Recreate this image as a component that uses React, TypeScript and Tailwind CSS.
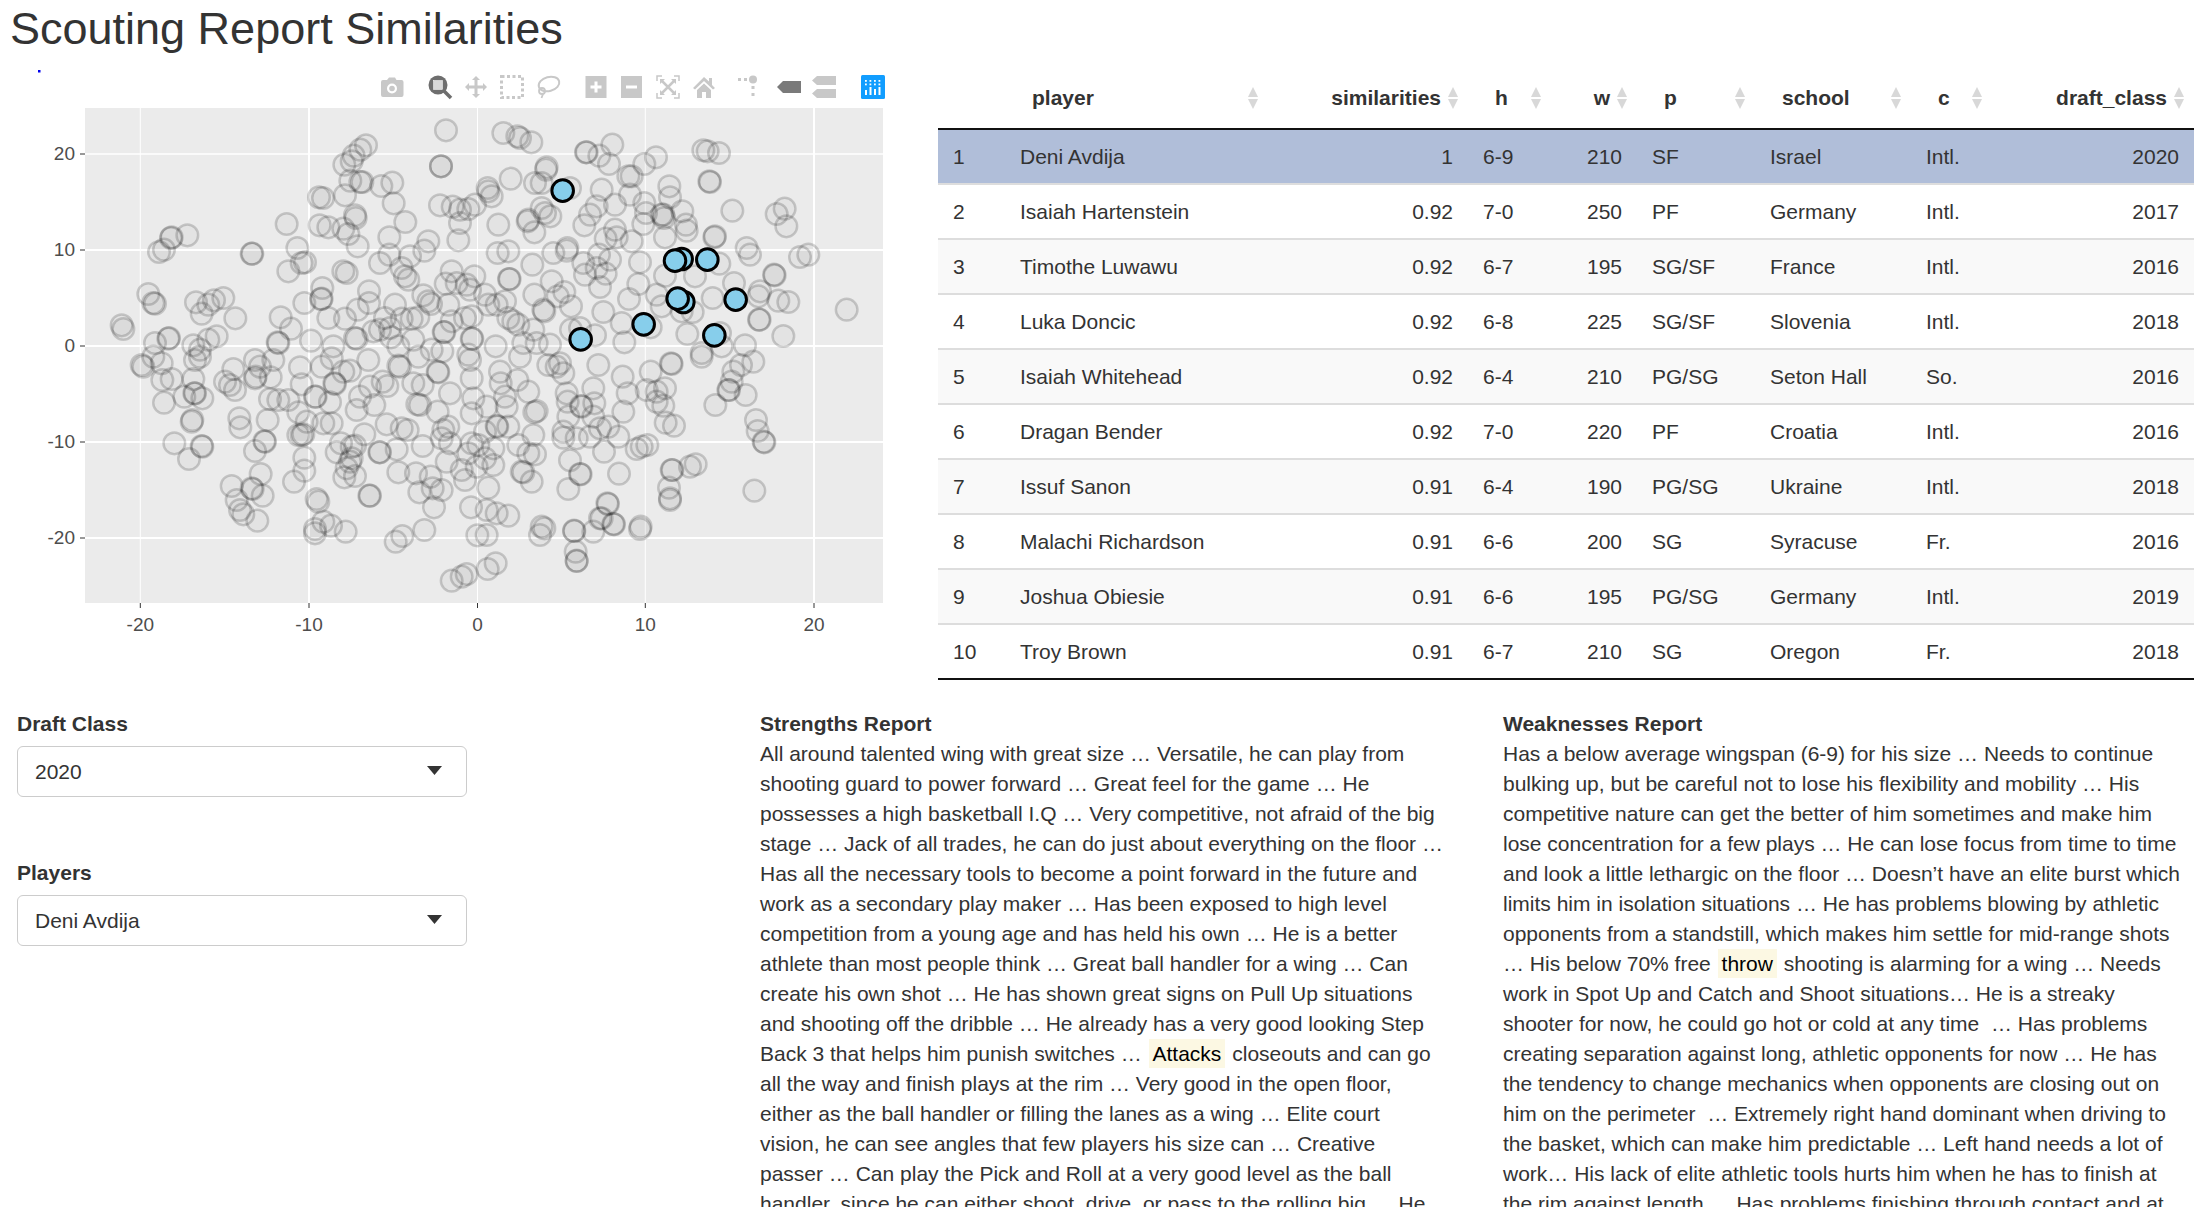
const tileA = [1083,67,1068,175,1068,175,843,112,826,125,806,143,800,160,778,170,796,218,826,222,832,222,889,234,922,224,926,286,780,262,702,268,714,270,1065,292,1103,296,1125,305,1150,303,1170,290,1125,345,1120,397,961,342,810,322,812,330,704,352,730,358,775,362,790,378,818,415,605,348,913,388,1030,400,1018,428,975,445,913,440,885,465,637,420,660,463,650,465,610,490,500,437,502,437,307,382,260,388,258,390,237,425,222,432,190,558,205,585,210,587,333,583,370,590,387,577,415,570,350,617,451,631,110,652,115,663,712,540,708,573,710,572,658,585,852,550,852,585,818,605,785,495,775,490,950,480,960,505,970,515,1100,490,1082,527,1115,525,1145,530,1168,505,1155,545,1015,562,1030,580,1038,588,930,590,1090,590,1200,560,1000,628,980,632,950,632,900,630,1100,640,1140,630,1160,625,1076,672,1078,672,1160,692,1162,692,730,630,780,632,587,628,618,662,578,703,580,705,678,698,745,715,810,690,815,692,865,670,885,665,918,688,985,695,940,715,915,660,1040,725,1072,730,1150,740,250,692,252,690,210,705,325,712,370,695,395,685,345,725];
const tileB = [55,75,97,85,105,90,139,103,305,133,303,133,343,143,382,110,372,168,478,168,513,148,655,127,668,130,702,135,673,220,675,222,185,178,183,185,77,212,150,225,170,225,255,240,8,240,10,250,20,265,430,205,440,205,350,245,553,235,555,268,592,310,742,308,875,318,899,302,904,355,435,260,478,285,390,290,335,295,315,320,298,352,170,300,180,315,196,325,130,335,128,340,148,373,40,350,483,315,530,320,535,320,537,330,603,350,605,368,540,388,390,365,362,392,395,388,440,400,475,348,690,385,688,388,785,420,795,440,945,447,970,440,247,420,245,428,205,435,38,435,70,430,142,470,465,463,375,455,342,440,295,465,300,500,335,480,362,497,345,537,72,513,74,513,200,520,460,528,540,503,630,505,703,467,867,500,869,502,747,525,825,550,820,565,880,578,910,582,683,570,238,552,218,565,148,560,432,573,515,560,530,595,590,610,623,612,258,595,175,605,178,610,355,612,60,580,35,590,10,590,70,630,85,640,100,650,822,635,824,635,410,645,497,658,330,682,258,665,285,660,145,665,418,703,607,678,705,675,650,735,710,715,780,712,895,684,1085,605,32,715,115,705,155,705,195,710];
const tileC = [205,5,170,30,175,35,230,25,260,72,232,75,325,72,345,5,330,15,237,143,298,125,328,115,330,115,352,130,322,195,320,200,463,190,466,217,420,80,445,42,450,105,435,90,510,70,512,65,525,35,557,67,510,15,565,15,645,37,650,88,690,125,692,125,735,142,748,85,750,87,775,50,795,47,710,35,740,10,850,15,855,95,825,125,815,165,868,150,893,80,907,93,940,32,945,35,985,85,1013,90,997,148,1005,150,1058,50,1060,52,1095,115,1058,170,1000,5,1155,15,1160,70,1165,130,1160,175,1200,230,548,195,555,132,580,135,610,135,640,172,665,200,715,205,740,205,905,208,950,220,968,225,838,238,1090,215,1075,225,1070,250,1095,265,1160,265,1180,270,1150,295,1130,345,1085,320,1140,375,1175,335,1200,310,1013,273,935,283,885,292,883,292,810,272,800,275,768,265,755,292,800,310,795,320,785,340,778,367,810,363,640,240,655,238,650,240,658,308,658,347,627,380,510,288,538,259,540,260,268,265,350,273,352,275,312,312,527,357,440,393,500,400,503,402,533,422,455,435,465,465,475,478,517,497,695,432,700,440,855,422,853,422,715,500,738,512,690,522,690,535,782,530,940,352,993,355,1037,365,1003,412,1043,400,1070,405,1047,457,1158,457,1177,541,1018,525,952,543,932,560,1100,677,1130,665,1145,657];
const tileD = [105,5,45,50,47,85,97,75,130,110,60,125,65,155,5,155,35,213,37,215,70,215,148,172,155,168,145,240,245,115,248,140,250,185,288,153,290,155,325,100,328,145,325,185,340,30,413,65,428,115,415,170,370,215,345,220,235,230,235,248,275,250,315,245,400,245,190,30,215,35,235,55,225,25,497,50,485,105,515,110,540,100,515,140,535,152,558,25,560,27,650,5,745,50,768,30,805,20,740,80,730,105,732,105,782,120,691,150,813,195,818,228,836,260,838,262,542,203,567,212,455,282,470,275,487,270,357,290,255,316,285,357,287,358,402,356,250,402,100,270,130,295,150,298,25,280,25,330,115,352,110,350,140,380,10,398,35,475,70,482,5,465,5,540,170,515,178,520,165,540,267,527,268,528,272,590,275,617,275,618,325,530,345,490,350,490,367,445,369,447,385,507,387,508,467,515,465,522,562,345,560,345,615,335,632,328,552,398,555,430,555,435,808,407,32,625,8,642];
const blue = [233,248,590,453,570,458,667,455,595,582,578,572,752,575,476,649,287,694,688,682];

function toPoints(flat: number[], ox: number, oy: number) {
  const out: [number, number][] = [];
  for (let i = 0; i < flat.length; i += 2) out.push([ox + flat[i] / 3, oy + flat[i + 1] / 3]);
  return out;
}

const greyDots = [
  ...toPoints(tileA, 85, 108),
  ...toPoints(tileB, 485, 108),
  ...toPoints(tileC, 85, 355),
  ...toPoints(tileD, 485, 355),
];
const blueDots = toPoints(blue, 485, 108);

const xTicks = [
  { label: "-20", x: 140.3, w: 1 },
  { label: "-10", x: 309, w: 2 },
  { label: "0", x: 477.5, w: 1 },
  { label: "10", x: 645.3, w: 1 },
  { label: "20", x: 814, w: 2 },
];
const yTicks = [
  { label: "20", y: 154, w: 1.5 },
  { label: "10", y: 250, w: 2 },
  { label: "0", y: 346, w: 2 },
  { label: "-10", y: 442, w: 2 },
  { label: "-20", y: 538, w: 2 },
];

function ModeIcon({ x, children }: { x: number; children: React.ReactNode }) {
  return <g transform={`translate(${x - 12} 75)`}>{children}</g>;
}

function ModeBar() {
  const idle = "#c8c8c8";
  const dark = "#6e6e6e";
  return (
    <g>
      {/* camera */}
      <ModeIcon x={392}>
        <path d="M1 7q0-2 2-2h4l2-2.500h6l1.500 2.500h5q2 0 2 2v13q0 2-2 2H3q-2 0-2-2z" fill={idle} />
        <circle cx="12" cy="13.500" r="5" fill="#fff" />
        <circle cx="12" cy="13.500" r="2.800" fill={idle} />
      </ModeIcon>
      {/* zoom */}
      <ModeIcon x={440}>
        <circle cx="10" cy="10" r="9.500" fill={dark} />
        <rect x="5.500" y="5.500" width="9" height="9" fill="#d8d8d8" stroke="#fff" strokeWidth="0.500" />
        <path d="M16 16l7 7" stroke={dark} strokeWidth="3.500" />
      </ModeIcon>
      {/* pan */}
      <ModeIcon x={476}>
        <path d="M12 1l4 4h-2.500v5.500H19V8l4 4-4 4v-2.500h-5.500V19H16l-4 4-4-4h2.500v-5.500H5V16l-4-4 4-4v2.500h5.500V5H8z" fill={idle} />
      </ModeIcon>
      {/* box select */}
      <ModeIcon x={512}>
        <rect x="1.500" y="1.500" width="21" height="21" fill="none" stroke={idle} strokeWidth="3" strokeDasharray="3 2.500" />
      </ModeIcon>
      {/* lasso */}
      <ModeIcon x={548}>
        <ellipse cx="13" cy="9" rx="10.500" ry="7" fill="none" stroke={idle} strokeWidth="2" transform="rotate(-15 13 9)" />
        <circle cx="6" cy="16" r="3" fill="none" stroke={idle} strokeWidth="1.800" />
        <path d="M7 19l-1.500 4" stroke={idle} strokeWidth="1.800" fill="none" />
      </ModeIcon>
      {/* zoom in */}
      <ModeIcon x={596.5}>
        <rect x="1" y="1" width="21" height="22" fill={idle} />
        <path d="M11.500 6.500v11M6 12h11" stroke="#fff" strokeWidth="3" />
      </ModeIcon>
      {/* zoom out */}
      <ModeIcon x={632}>
        <rect x="1" y="1" width="21" height="22" fill={idle} />
        <path d="M6 12h11" stroke="#fff" strokeWidth="3" />
      </ModeIcon>
      {/* autoscale */}
      <ModeIcon x={668}>
        <path d="M6 1H1v5M18 1h5v5M6 23H1v-5M18 23h5v-5" fill="none" stroke={idle} strokeWidth="1.500" />
        <path d="M6 6l12 12M18 6L6 18" stroke={idle} strokeWidth="2.500" />
        <path d="M4 4h5L4 9zM20 4h-5l5 5zM4 20h5l-5-5zM20 20h-5l5-5z" fill={idle} />
      </ModeIcon>
      {/* home */}
      <ModeIcon x={704}>
        <path d="M12 2L1 13l2 1.500L12 6l9 8.500 2-1.500-3-3V3h-3v3.500z" fill={idle} />
        <path d="M5 15l7-6.500 7 6.500v8h-5v-6h-4v6H5z" fill={idle} />
      </ModeIcon>
      {/* spike lines */}
      <ModeIcon x={750}>
        <rect x="0" y="3" width="3" height="3" fill={idle} />
        <rect x="6" y="3" width="3" height="3" fill={idle} />
        <circle cx="15" cy="4.500" r="4" fill={idle} />
        <rect x="13.500" y="11" width="3" height="3" fill={idle} />
        <rect x="13.500" y="18" width="3" height="3" fill={idle} />
      </ModeIcon>
      {/* hover closest */}
      <ModeIcon x={789}>
        <path d="M0 12l6-6h18v12H6z" fill="#7a7a7a" />
      </ModeIcon>
      {/* hover compare */}
      <ModeIcon x={824}>
        <path d="M0 5.500L5 1h19v9H5zM0 18.500L5 14h19v9H5z" fill={idle} />
      </ModeIcon>
      {/* plotly logo */}
      <rect x="861" y="75" width="24" height="24" rx="1.500" fill="#119dff" />
      <g fill="#fff">
        {[865, 869.5, 874, 878.5].map((x) => (
          <g key={x}>
            <rect x={x} y="80" width="1.800" height="1.800" />
            <rect x={x} y="83.500" width="1.800" height="1.800" />
          </g>
        ))}
        <rect x="865" y="90" width="2" height="5" />
        <rect x="869.500" y="87" width="2" height="8" />
        <rect x="874" y="89" width="2" height="6" />
        <rect x="878.500" y="87" width="2" height="8" />
      </g>
    </g>
  );
}

function ScatterPlot() {
  return (
    <svg width="938" height="649" viewBox="0 60 938 649" className="block shrink-0">
      <rect x="38" y="70" width="2.500" height="2.500" fill="#0000ee" />
      <ModeBar />
      <rect x="85" y="108" width="798" height="495" fill="#ebebeb" />
      {xTicks.map((t) => (
        <g key={t.label}>
          <line x1={t.x} x2={t.x} y1="108" y2="603" stroke="#fff" strokeWidth={t.w} />
          <line x1={t.x} x2={t.x} y1="603" y2="608" stroke="#333" strokeWidth="1" />
          <text x={t.x} y="631" textAnchor="middle" fontSize="19" fill="#4d4d4d">{t.label}</text>
        </g>
      ))}
      {yTicks.map((t) => (
        <g key={t.label}>
          <line x1="85" x2="883" y1={t.y} y2={t.y} stroke="#fff" strokeWidth={t.w} />
          <line x1="80" x2="85" y1={t.y} y2={t.y} stroke="#333" strokeWidth="1" />
          <text x="75" y={t.y + 6} textAnchor="end" fontSize="19" fill="#4d4d4d">{t.label}</text>
        </g>
      ))}
      {greyDots.map(([x, y], i) => (
        <circle key={i} cx={x} cy={y} r="10.800" fill="#000" fillOpacity="0.03" stroke="#000" strokeOpacity="0.17" strokeWidth="2.500" />
      ))}
      {blueDots.map(([x, y], i) => (
        <circle key={i} cx={x} cy={y} r="10.800" fill="#87ceeb" stroke="#000" strokeWidth="3" />
      ))}
    </svg>
  );
}

function SortIcon() {
  return (
    <svg width="12" height="24" viewBox="0 0 12 24" className="absolute right-[9px] top-[26px]">
      <path d="M6 1l5 10H1z" fill="#d8d8d8" />
      <path d="M6 23l5-10H1z" fill="#d8d8d8" />
    </svg>
  );
}

const rows = [
  [1, "Deni Avdija", "1", "6-9", 210, "SF", "Israel", "Intl.", 2020],
  [2, "Isaiah Hartenstein", "0.92", "7-0", 250, "PF", "Germany", "Intl.", 2017],
  [3, "Timothe Luwawu", "0.92", "6-7", 195, "SG/SF", "France", "Intl.", 2016],
  [4, "Luka Doncic", "0.92", "6-8", 225, "SG/SF", "Slovenia", "Intl.", 2018],
  [5, "Isaiah Whitehead", "0.92", "6-4", 210, "PG/SG", "Seton Hall", "So.", 2016],
  [6, "Dragan Bender", "0.92", "7-0", 220, "PF", "Croatia", "Intl.", 2016],
  [7, "Issuf Sanon", "0.91", "6-4", 190, "PG/SG", "Ukraine", "Intl.", 2018],
  [8, "Malachi Richardson", "0.91", "6-6", 200, "SG", "Syracuse", "Fr.", 2016],
  [9, "Joshua Obiesie", "0.91", "6-6", 195, "PG/SG", "Germany", "Intl.", 2019],
  [10, "Troy Brown", "0.91", "6-7", 210, "SG", "Oregon", "Fr.", 2018],
];

function SimilarityTable() {
  const th = "relative h-[69px] pt-[8px] font-bold text-left pl-[27px]";
  const thRight = "relative h-[69px] pt-[8px] font-bold text-right pr-[27px]";
  const td = "px-[15px] h-[55px] p-0";
  return (
    <table className="table-fixed border-collapse w-[1256px] shrink-0 text-[21px] text-[#333]">
      <colgroup>
        <col className="w-[67px]" />
        <col className="w-[263px]" />
        <col className="w-[200px]" />
        <col className="w-[83px]" />
        <col className="w-[86px]" />
        <col className="w-[118px]" />
        <col className="w-[156px]" />
        <col className="w-[81px]" />
        <col className="w-[202px]" />
      </colgroup>
      <thead>
        <tr className="border-b-2 border-[#111]">
          <th className={th}></th>
          <th className={th}>player<SortIcon /></th>
          <th className={thRight}>similarities<SortIcon /></th>
          <th className={th}>h<SortIcon /></th>
          <th className={thRight}>w<SortIcon /></th>
          <th className={th}>p<SortIcon /></th>
          <th className={th}>school<SortIcon /></th>
          <th className={th}>c<SortIcon /></th>
          <th className={thRight}>draft_class<SortIcon /></th>
        </tr>
      </thead>
      <tbody>
        {rows.map((r, i) => (
          <tr
            key={i}
            className={
              (i === 0 ? "bg-[#b0bed9] " : i % 2 === 0 ? "bg-[#f9f9f9] " : "bg-white ") +
              (i === rows.length - 1 ? "border-b-2 border-[#111]" : "border-b-2 border-[#ddd]")
            }
          >
            <td className={td}>{r[0]}</td>
            <td className={td}>{r[1]}</td>
            <td className={td + " text-right"}>{r[2]}</td>
            <td className={td}>{r[3]}</td>
            <td className={td + " text-right"}>{r[4]}</td>
            <td className={td}>{r[5]}</td>
            <td className={td}>{r[6]}</td>
            <td className={td}>{r[7]}</td>
            <td className={td + " text-right"}>{r[8]}</td>
          </tr>
        ))}
      </tbody>
    </table>
  );
}

function Dropdown({ label, value, className }: { label: string; value: string; className?: string }) {
  return (
    <div className={className}>
      <div className="font-bold leading-[30px]">{label}</div>
      <div className="mt-[7px] w-[450px] h-[51px] border-[1.5px] border-[#ccc] rounded-[6px] flex items-center justify-between pl-[17px] pr-[24px] bg-white">
        <span>{value}</span>
        <svg width="15" height="9" viewBox="0 0 15 9" className="-mt-[2px]"><path d="M0 0h15L7.500 9z" fill="#333" /></svg>
      </div>
    </div>
  );
}

function Mark({ children }: { children: React.ReactNode }) {
  return <mark className="bg-[#fcf8e3] text-black px-[4px] py-[3px] mx-[1px]">{children}</mark>;
}

export default function App() {
  return (
    <div className="h-screen overflow-hidden bg-white text-[#333] [font-family:'Liberation_Sans',sans-serif]">
      <h1 className="h-[60px] pl-[10px] text-[45px] leading-[58px] font-normal">Scouting Report Similarities</h1>

      <div className="flex items-start">
        <ScatterPlot />
        <SimilarityTable />
      </div>

      <div className="flex items-start text-[21px] leading-[30px]">
        <div className="w-[760px] pl-[17px] shrink-0">
          <Dropdown label="Draft Class" value="2020" />
          <Dropdown label="Players" value="Deni Avdija" className="mt-[61px]" />
        </div>

        <div className="w-[685px] shrink-0">
          <div className="font-bold">Strengths Report</div>
          <p>
            All around talented wing with great size … Versatile, he can play from shooting guard to power forward … Great feel for the game … He possesses a high basketball I.Q … Very competitive, not afraid of the big stage … Jack of all trades, he can do just about everything on the floor … Has all the necessary tools to become a point forward in the future and work as a secondary play maker … Has been exposed to high level competition from a young age and has held his own … He is a better athlete than most people think … Great ball handler for a wing … Can create his own shot … He has shown great signs on Pull Up situations and shooting off the dribble … He already has a very good looking Step Back 3 that helps him punish switches … <Mark>Attacks</Mark> closeouts and can go all the way and finish plays at the rim … Very good in the open floor, either as the ball handler or filling the lanes as a wing … Elite court vision, he can see angles that few players his size can … Creative<br />passer … Can play the Pick and Roll at a very good level as the ball handler, since he can either shoot, drive, or pass to the rolling big … He
          </p>
        </div>

        <div className="w-[685px] ml-[58px] shrink-0">
          <div className="font-bold">Weaknesses Report</div>
          <p>
            Has a below average wingspan (6-9) for his size … Needs to continue bulking up, but be careful not to lose his flexibility and mobility … His competitive nature can get the better of him sometimes and make him lose concentration for a few plays … He can lose focus from time to time and look a little lethargic on the floor … Doesn’t have an elite burst which limits him in isolation situations … He has problems blowing by athletic opponents from a standstill, which makes him settle for mid-range shots … His below 70% free <Mark>throw</Mark> shooting is alarming for a wing … Needs work in Spot Up and Catch and Shoot situations… He is a streaky shooter for now, he could go hot or cold at any time&nbsp; … Has problems creating separation against long, athletic opponents for now … He has the tendency to change mechanics when opponents are closing out on him on the perimeter&nbsp; … Extremely right hand dominant when driving to the basket, which can make him predictable … Left hand needs a lot of work… His lack of elite athletic tools hurts him when he has to finish at the rim against length … Has problems finishing through contact and at
          </p>
        </div>
      </div>
    </div>
  );
}
